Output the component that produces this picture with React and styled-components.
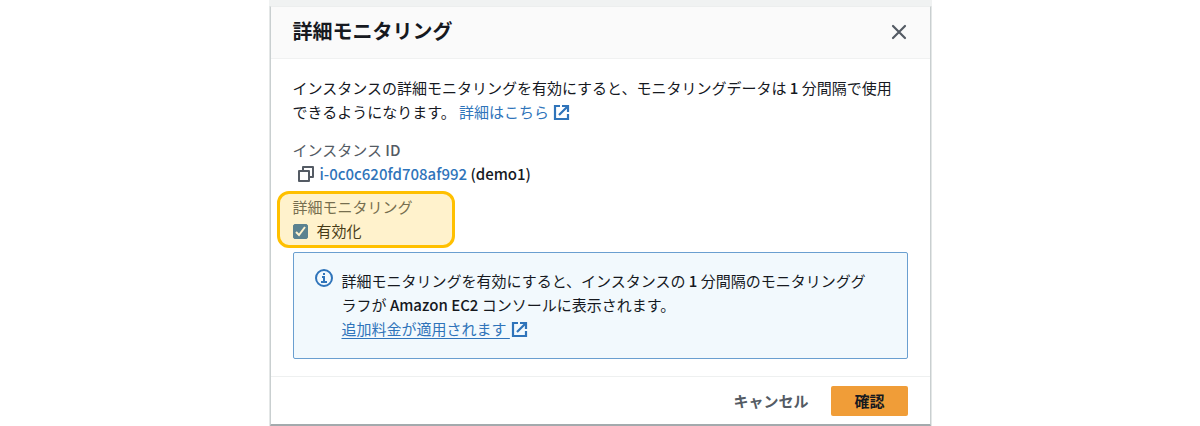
import React, { useState } from 'react';
import styled, { createGlobalStyle } from 'styled-components';

const GlobalStyle = createGlobalStyle`
  * {
    box-sizing: border-box;
  }

  body {
    margin: 0;
    background: #fff;
    color: #16191f;
    font-family: 'Noto Sans CJK JP', sans-serif;
    font-size: 15px;
    line-height: 24px;
  }
`;

const ScBackdrop = styled.div`
  max-width: 663px;
  margin: 0 auto;
  padding: 6px 1px 1px;
  background: linear-gradient(#f0f2f2 6px, #e4e7e7 6px);
`;

const ScModal = styled.section`
  background: #fff;
  border: 1px solid #c9cfd0;
  border-top-color: #eceeee;
  border-bottom: 2px solid #a3aaad;
`;

const ScHeader = styled.header`
  display: flex;
  align-items: center;
  justify-content: space-between;
  padding: 10px 21px 13px 22px;
  background: #fafafa;
  border-bottom: 1px solid #f0f1f1;
`;

const ScTitle = styled.h2`
  margin: 0;
  font-size: 20px;
  line-height: 28px;
  font-weight: 700;
`;

const ScCloseButton = styled.button`
  display: flex;
  padding: 3px 2px 2px;
  border: 0;
  background: none;
  color: #545b64;
  cursor: pointer;
`;

const ScBody = styled.div`
  padding: 17px 22px;
`;

const ScParagraph = styled.p`
  margin: 0;
`;

const ScLink = styled.a`
  color: #2f74ba;
  text-decoration: ${({ $underline }) => ($underline ? 'underline' : 'none')};
  text-underline-offset: 3px;

  svg {
    margin-left: 1px;
    vertical-align: -3px;
  }
`;

const ScLatin = styled.span`
  font-weight: 500;
`;

const ScField = styled.div`
  margin-top: 14px;
`;

const ScFieldName = styled.div`
  color: #545b64;
`;

const ScInstance = styled.div`
  display: flex;
  align-items: center;
  gap: 6px;
  padding-left: 5px;
`;

const ScCopyButton = styled.button`
  display: flex;
  padding: 0;
  border: 0;
  background: none;
  color: #545b64;
  cursor: pointer;
`;

const ScMonitoring = styled.div`
  position: relative;
  margin-top: 9px;
`;

const ScHighlight = styled.div`
  position: absolute;
  inset: -4px auto -5px -16px;
  width: 178px;
  border: 3px solid #ffc000;
  border-radius: 12px;
  background: rgba(255, 192, 0, 0.2);
  pointer-events: none;
`;

const ScCheckLabel = styled.label`
  display: inline-flex;
  align-items: center;
  gap: 9px;
  vertical-align: top;
`;

const ScCheckBox = styled.span`
  display: grid;

  > * {
    grid-area: 1 / 1;
  }
`;

const ScCheckInput = styled.input`
  appearance: none;
  width: 15px;
  height: 15px;
  margin: 0;
  border: 1px solid #3373b4;
  border-radius: 2px;
  background: ${({ checked }) => (checked ? '#3373b4' : '#fff')};
`;

const ScCheckMark = styled.svg`
  pointer-events: none;
`;

const ScInfo = styled.div`
  display: flex;
  align-items: flex-start;
  gap: 9px;
  margin-top: 9px;
  padding: 16px 21px 17px;
  border: 1px solid #6a9fd0;
  border-radius: 2px;
  background: #f2f9fd;

  > svg {
    flex: none;
  }
`;

const ScFooter = styled.footer`
  display: flex;
  justify-content: flex-end;
  padding: 9px 22px 8px;
  border-top: 1px solid #eef0f0;
`;

const ScButton = styled.button`
  height: 30px;
  padding: 0 23px;
  border: 0;
  border-radius: 2px;
  background: ${({ $primary }) => ($primary ? '#f09d38' : 'transparent')};
  color: ${({ $primary }) => ($primary ? '#16191f' : '#545b64')};
  font: inherit;
  font-weight: 700;
  cursor: pointer;
`;

const ExternalIcon = () => (
  <svg width='17' height='17' viewBox='0 0 17 17' fill='none' stroke='currentColor' strokeWidth='2.2' aria-hidden='true'>
    <path d='M7 2H2v13h13v-5M9 2h6v6M15 2L6 11' />
  </svg>
);

const CopyIcon = () => (
  <svg width='16' height='16' viewBox='0 0 16 16' fill='none' stroke='currentColor' strokeWidth='2' strokeLinejoin='round' aria-hidden='true'>
    <path d='M1 5h10v10H1zM5 5V1h10v10h-4' />
  </svg>
);

const InfoIcon = () => (
  <svg width='18' height='18' viewBox='0 0 18 18' fill='none' stroke='#2f74ba' strokeWidth='2' aria-hidden='true'>
    <circle cx='9' cy='9' r='8' />
    <path d='M9 4v2M7 8h2v5M6 13h6' />
  </svg>
);

const CloseIcon = () => (
  <svg width='16' height='16' viewBox='0 0 16 16' fill='none' stroke='currentColor' strokeWidth='2.2' strokeLinecap='round' aria-hidden='true'>
    <path d='M2 2l12 12M14 2L2 14' />
  </svg>
);

const App = () => {
  //state
  const [isEnabled, setIsEnabled] = useState(true);

  return (
    <>
      <GlobalStyle />
      <ScBackdrop>
        <ScModal role='dialog' aria-labelledby='title'>
          <ScHeader>
            <ScTitle id='title'>詳細モニタリング</ScTitle>
            <ScCloseButton type='button' aria-label='閉じる'>
              <CloseIcon />
            </ScCloseButton>
          </ScHeader>

          <ScBody>
            <ScParagraph>
              インスタンスの詳細モニタリングを有効にすると、モニタリングデータは <ScLatin>1</ScLatin> 分間隔で使用
              <br />
              できるようになります。{' '}
              <ScLink href='#details'>
                詳細はこちら <ExternalIcon />
              </ScLink>
            </ScParagraph>

            <ScField>
              <ScFieldName>
                インスタンス <ScLatin>ID</ScLatin>
              </ScFieldName>
              <ScInstance>
                <ScCopyButton type='button' aria-label='コピー'>
                  <CopyIcon />
                </ScCopyButton>
                <ScLatin>
                  <ScLink href='#instance'>i-0c0c620fd708af992</ScLink> (demo1)
                </ScLatin>
              </ScInstance>
            </ScField>

            <ScMonitoring>
              <ScFieldName>詳細モニタリング</ScFieldName>
              <ScCheckLabel htmlFor='monitoring'>
                <ScCheckBox>
                  <ScCheckInput type='checkbox' id='monitoring' checked={isEnabled} onChange={(e) => setIsEnabled(e.target.checked)} />
                  {isEnabled && (
                    <ScCheckMark width='15' height='15' viewBox='0 0 15 15' fill='none' stroke='#fff' strokeWidth='2' aria-hidden='true'>
                      <path d='M3 8l3 3 6-8' />
                    </ScCheckMark>
                  )}
                </ScCheckBox>
                有効化
              </ScCheckLabel>
              <ScHighlight />
            </ScMonitoring>

            <ScInfo>
              <InfoIcon />
              <ScParagraph>
                詳細モニタリングを有効にすると、インスタンスの <ScLatin>1</ScLatin> 分間隔のモニタリンググ
                <br />
                ラフが <ScLatin>Amazon EC2</ScLatin> コンソールに表示されます。
                <br />
                <ScLink href='#pricing' $underline>
                  追加料金が適用されます <ExternalIcon />
                </ScLink>
              </ScParagraph>
            </ScInfo>
          </ScBody>

          <ScFooter>
            <ScButton type='button'>キャンセル</ScButton>
            <ScButton type='button' $primary>
              確認
            </ScButton>
          </ScFooter>
        </ScModal>
      </ScBackdrop>
    </>
  );
};

export default App;
